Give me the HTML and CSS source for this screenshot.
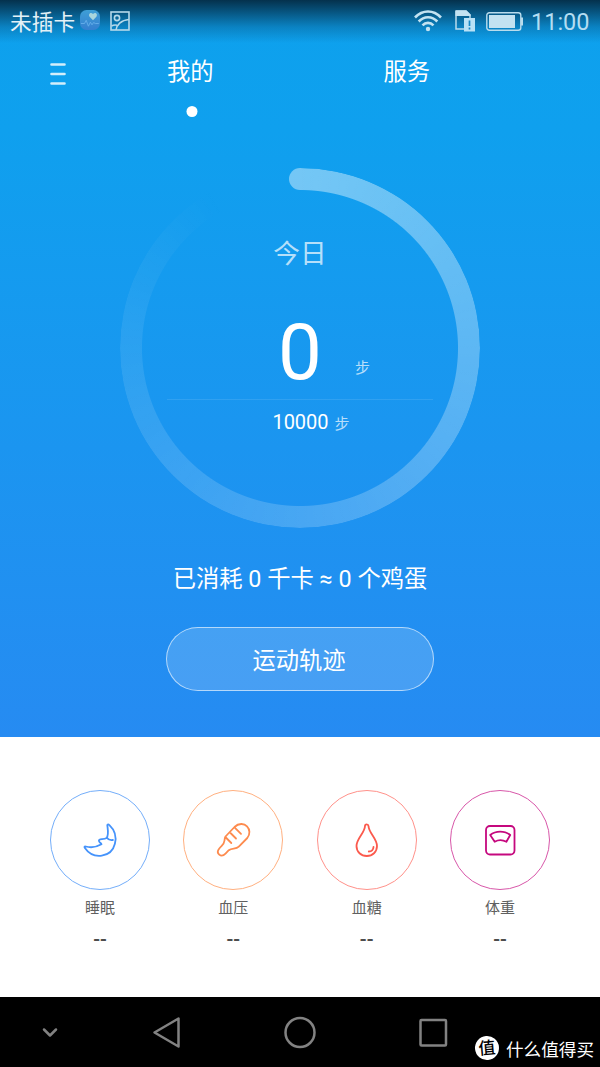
FILE: index.html
```html
<!DOCTYPE html>
<html lang="zh-CN">
<head>
<meta charset="utf-8">
<title>运动健康</title>
<link rel="stylesheet" href="styles.css">
</head>
<body>
<main class="app">
  <section class="hero">
    <div class="status">
      <span class="carrier">未插卡</span>
      <svg class="health" width="20" height="20" viewBox="0 0 20 20">
        <defs><linearGradient id="tile" x1="0" y1="0" x2="0" y2="1"><stop offset="0" stop-color="#3f9fd6"/><stop offset="1" stop-color="#347fd0"/></linearGradient></defs>
        <rect width="20" height="20" rx="6.5" fill="url(#tile)"/>
        <path d="M13 10.2 9.6 6.7C7.900 4.500 10.500 1.600 13 4c2.500-2.400 5.100.5 3.400 2.700z" fill="#a9d5dd"/>
        <path d="M1 13.500h3.500l1.700-3.200 2.200 5.900 2-4 1.600 2.600 1.600-2.300 1.700 1h3.500" fill="none" stroke="#67afea" stroke-width=".9"/>
      </svg>
      <svg class="picture" width="20" height="20" viewBox="0 0 20 20" fill="none" stroke="#b6d9ea" stroke-width="1.600">
        <rect x="1" y="1" width="18" height="18"/><circle cx="7" cy="7" r="2.600"/><path d="M6 19c.5-5 5-10 13-10.500M1.500 15c1.500-.8 3.500-1.200 5.500-.8"/>
      </svg>
      <svg class="wifi" width="28" height="22" viewBox="0 0 28 22" fill="none" stroke="#c3e2f1" stroke-width="2.600">
        <path d="M1 7.500C8.500-.5 19.500-.5 27 7.500M4.700 11.500c5.300-5.700 13.300-5.700 18.600 0M8.500 15.300c3.100-3.300 7.900-3.300 11 0"/><circle cx="14" cy="19" r="2.200" fill="#c3e2f1" stroke="none"/>
      </svg>
      <svg class="sim" width="20" height="22" viewBox="0 0 20 22">
        <path d="M1 1h10l4 4v3M1 .5V19h8" fill="none" stroke="#b9dced" stroke-width="1.500"/><path d="M.5.5h11l4 4V6h-15z" fill="#c3e2f1"/>
        <rect x="9" y="8" width="11" height="13.500" fill="#b9e1f6"/><path d="M14.500 10.500v5.500M14.500 17.500v2" stroke="#1788c6" stroke-width="1.700"/>
      </svg>
      <svg class="battery" width="38" height="20" viewBox="0 0 38 20">
        <rect x=".8" y=".8" width="34" height="17.500" rx="2.500" fill="none" stroke="#b9dced" stroke-width="1.400"/><rect x="3" y="3" width="26" height="13" fill="#c3e2f1"/><path d="M35 5.500h2v8h-2" fill="#b9dced"/>
      </svg>
      <span class="clock">11:00</span>
    </div>
    <header class="header">
      <svg class="menu" width="16" height="24" viewBox="0 0 16 24" stroke="#d3eefb" stroke-width="2.600" stroke-linecap="round"><path d="M1.500 2.500h13M1.500 12h13M1.500 21.500h13"/></svg>
      <div class="tab">我的<i class="dot"></i></div>
      <div class="tab">服务</div>
    </header>
    <div class="dial">
      <div class="track"></div>
      <div class="today">今日</div>
      <div class="steps"><span class="count">0</span><span class="unit">步</span></div>
      <div class="goal">10000<span class="unit">步</span></div>
    </div>
    <div class="burned">已消耗 0 千卡 ≈ 0 个鸡蛋</div>
    <div class="button">运动轨迹</div>
  </section>
  <section class="metrics">
    <div class="metric sleep">
      <div class="ring"><svg width="50" height="50" viewBox="0 0 50 50"><path d="M32.300 10.200c.2-1.200 1.200-1.100 1.900-.4 5.300 5 7.500 12 5.700 19C36.500 42.500 18.500 45.500 9.700 32.800c-.6-1 0-1.600 1-1.300 5 1.400 10.500.8 15.800-2.200-.5-1.400-2.500-2-2.600-3.600 0-2.400 4.600-.7 7.700-2.700 2.400-3.300 1.200-8.500.7-12.800M31.900 22.700c1.500 2.200 3.700 2.700 6 2.300"/></svg></div>
      <div class="name">睡眠</div><div class="value">--</div>
    </div>
    <div class="metric pressure">
      <div class="ring"><svg width="50" height="50" viewBox="0 0 50 50"><path d="m17.500 21.500 9-9.500c4.500-4.500 10-3.300 12.500-.7 3 3 3.300 8 .3 11.700l-8.500 8.700c-3 3-6.800.8-10 3.500l-3.300 3.400c-4.500 4.700-10.200-.3-6.200-5.100 3.200-3.800 4.700-3.700 5.200-8 .2-1.700.2-2.800 1-4zM17.800 22.500l5.500 5.500M22 17.500l6 6M27 12.800l6 6"/></svg></div>
      <div class="name">血压</div><div class="value">--</div>
    </div>
    <div class="metric sugar">
      <div class="ring"><svg width="50" height="50" viewBox="0 0 50 50"><path d="M23 11c0-2.300 3.300-2.300 3.500 0 .2 7 8.500 12.500 8.500 20 0 6-4.500 10-10.200 10S14.500 37 14.500 31c0-7.500 8.300-13 8.500-20zM31.500 32c-.2 2.700-2 4.500-4.700 4.500"/></svg></div>
      <div class="name">血糖</div><div class="value">--</div>
    </div>
    <div class="metric weight">
      <div class="ring"><svg width="50" height="50" viewBox="0 0 50 50"><rect x="11" y="11" width="28.500" height="28.500" rx="4"/><path d="M15.200 20c5.500-4.500 14.500-4.500 20 0l-3.800 6.800c-3.700-2-8.200-2-11.700 0z"/></svg></div>
      <div class="name">体重</div><div class="value">--</div>
    </div>
  </section>
  <nav class="nav">
    <svg class="keys" width="460" height="70" viewBox="0 0 460 70" fill="none" stroke="#828282" stroke-width="2.500" stroke-linecap="round" stroke-linejoin="round">
      <path d="m44 32.500 6 6 6-6M154.500 35.500l24-14v28z"/><circle cx="300" cy="35.500" r="14.500"/><rect x="420.500" y="23" width="25.500" height="25.500" rx="1"/>
    </svg>
    <div class="brand"><span class="badge">值</span>什么值得买</div>
  </nav>
</main>
</body>
</html>
```
FILE: styles.css
```css
body { margin: 0; font-family: Roboto, "Noto Sans CJK SC", sans-serif; }
.app { width: 600px; height: 1067px; overflow: hidden; background: #fff; }
.app svg { display: block; flex: none; }
.hero { height: 737px; color: #fff; display: flex; flex-direction: column; align-items: center; background: linear-gradient(#0da1ed 0, #0fa0ee 130px, #268bf2 100%); }

.status { width: 600px; height: 43px; flex: none; display: flex; box-sizing: border-box; padding-left: 10px; background: linear-gradient(rgba(4, 42, 66, .94), rgba(4, 50, 78, .74) 10px, rgba(4, 60, 95, .3) 27px, rgba(4, 60, 95, 0)); }
.carrier { width: 70px; font-size: 21.700px; line-height: 45px; color: #e4f1f7; white-space: nowrap; }
.health { margin-top: 10px; }
.picture { margin: 10.500px 0 0 10px; }
.wifi { margin: 10px 0 0 284px; }
.sim { margin: 10px 0 0 13px; }
.battery { margin: 12px 0 0 11px; }
.clock { margin-left: 7px; font-size: 23.500px; line-height: 44px; color: #b4ddf2; white-space: nowrap; }

.header { width: 600px; height: 76px; flex: none; display: flex; box-sizing: border-box; padding-left: 50px; }
.menu { margin: 18.500px 16px 0 0; }
.tab { width: 216.500px; text-align: center; font-size: 23.300px; line-height: 59px; }
.dot { display: block; width: 11px; height: 11px; border-radius: 50%; background: #fff; margin: 4px auto 0; transform: translateX(1.500px); }

.dial { position: relative; width: 360px; height: 360px; flex: none; margin-top: 49px; display: flex; flex-direction: column; align-items: center; }
.track { position: absolute; inset: 0; border-radius: 50%; background: conic-gradient(rgba(255, 255, 255, .42), rgba(255, 255, 255, .19) 180deg, rgba(255, 255, 255, .09) 270deg, rgba(255, 255, 255, 0) 331deg); -webkit-mask: radial-gradient(circle, transparent 157.500px, #000 158.500px); mask: radial-gradient(circle, transparent 157.500px, #000 158.500px); }
.dial::before { content: ""; position: absolute; left: 168.500px; top: 0; width: 11.500px; height: 22px; border-radius: 11px 0 0 11px; background: rgba(255, 255, 255, .42); }
.today { margin-top: 66px; height: 40px; font-size: 26.700px; line-height: 40px; color: rgba(255, 255, 255, .7); }
.steps { width: 266px; height: 125px; border-bottom: 1px solid rgba(255, 255, 255, .1); display: grid; grid-template-columns: 1fr auto 1fr; }
.count { grid-column: 2; font-size: 78px; line-height: 157px; }
.unit { font-size: 15px; color: rgba(255, 255, 255, .7); }
.steps .unit { line-height: 189px; margin-left: 33px; }
.goal { margin: 9px 0 0 22px; font-size: 20px; line-height: 26px; }
.goal .unit { margin-left: 6px; }
.burned { margin-top: 33px; height: 36px; font-size: 23.300px; line-height: 36px; white-space: pre; }
.button { width: 266px; height: 62px; margin-top: 30px; border: 1px solid rgba(255, 255, 255, .6); border-radius: 32px; background: rgba(255, 255, 255, .16); text-align: center; font-size: 23.300px; line-height: 66px; text-indent: -2px; }

.metrics { height: 260px; display: grid; grid-template-columns: repeat(4, 133.330px); justify-content: center; box-sizing: border-box; padding-top: 53px; }
.metric { display: flex; flex-direction: column; align-items: center; color: #4d4d4d; }
.ring { width: 98px; height: 98px; border: 1px solid; border-radius: 50%; display: grid; place-content: center; }
.ring svg { fill: none; stroke-width: 1.800; stroke-linecap: round; stroke-linejoin: round; }
.sleep .ring { border-color: #74aefa; stroke: #4593fb; }
.pressure .ring { border-color: #ffb080; stroke: #fd8b4e; }
.sugar .ring { border-color: #ff918a; stroke: #fb5a4d; }
.weight .ring { border-color: #d857a9; stroke: #c5087e; }
.name { margin-top: 6px; font-size: 15px; line-height: 24px; color: #606060; }
.value { margin-top: 7px; font-size: 20px; line-height: 24px; font-weight: 500; }

.nav { height: 70px; background: #000; display: flex; }
.brand { display: flex; align-items: center; margin: 35px 0 0 15px; height: 32px; font-size: 17.600px; color: #fff; white-space: nowrap; }
.badge { width: 24px; height: 24px; border-radius: 50%; background: #fff; color: #000; text-align: center; font-size: 17px; line-height: 24px; font-weight: 500; margin-right: 7px; transform: rotate(-5deg); }
```
